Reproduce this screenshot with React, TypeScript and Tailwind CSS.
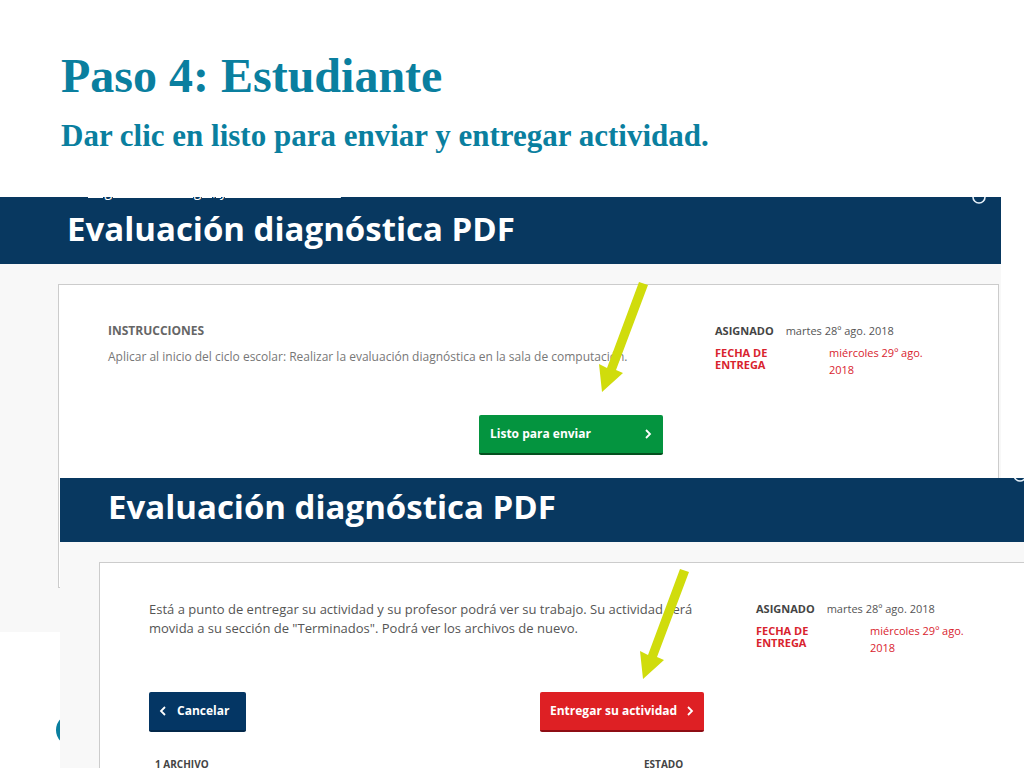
import type { ReactNode } from "react";

function Arrow({ className }: { className: string }) {
  return (
    <svg
      viewBox="0 0 49 110"
      className={`absolute bottom-full w-[49px] h-[110px] pointer-events-none ${className}`}
      aria-hidden="true"
    >
      <polygon points="40,0 49,3 17,88 24,91 3,110 0,82 8,86" fill="#d0dc0c" />
    </svg>
  );
}

function Chevron({ left = false }: { left?: boolean }) {
  return (
    <svg viewBox="0 0 8 12" className="w-2 h-3 shrink-0" aria-hidden="true">
      <path
        d={left ? "M6 2 L2 6 L6 10" : "M2 2 L6 6 L2 10"}
        fill="none"
        stroke="currentColor"
        strokeWidth="1.8"
      />
    </svg>
  );
}

function Ring({ className }: { className: string }) {
  return (
    <svg viewBox="0 0 14 14" className={`absolute size-3.5 ${className}`} aria-hidden="true">
      <circle cx="7" cy="7" r="6" fill="none" stroke="#e8f2fa" strokeWidth="1.6" />
    </svg>
  );
}

function Dates() {
  return (
    <dl className="text-[11px]">
      <div className="flex gap-3 leading-[17px]">
        <dt className="font-bold text-[#444]">ASIGNADO</dt>
        <dd className="text-[#555]">martes 28º ago. 2018</dd>
      </div>
      <div className="flex mt-[5px] text-[#d9232e]">
        <dt className="w-[114px] pt-[3px] pr-10 font-bold leading-3">FECHA DE ENTREGA</dt>
        <dd className="w-[110px] leading-[17px]">miércoles 29º ago. 2018</dd>
      </div>
    </dl>
  );
}

function Card({ children, className }: { children: ReactNode; className: string }) {
  return (
    <div
      className={`grid grid-cols-[1fr_234px] gap-x-[52px] px-[49px] pt-[37px] bg-white border border-[#ccc] ${className}`}
    >
      {children}
    </div>
  );
}

function App() {
  return (
    <main className="flex flex-col min-h-screen overflow-hidden bg-white font-['Open_Sans',sans-serif]">
      {/* Slide title */}
      <header className="h-[197px] pl-[61px] pt-12 font-['Liberation_Serif',serif] font-bold text-[#0a7f9f]">
        <h1 className="text-5xl leading-[56px]">Paso 4: Estudiante</h1>
        <p className="mt-3 text-[31px] leading-10">Dar clic en listo para enviar y entregar actividad.</p>
      </header>

      <div className="relative grid grow">
        {/* Slide logo, mostly hidden by the second capture */}
        <div className="absolute left-14 top-[517px] size-8 rounded-full bg-[#0a7f9f]" />

        {/* Step 1 */}
        <section className="relative col-start-1 row-start-1 self-start mr-[23px] pb-11 bg-[#f8f8f8]">
          <div className="relative h-[67px] pl-[67px] overflow-hidden bg-[#083860] text-white">
            <a href="#" className="absolute left-[74px] -top-4 flex items-center gap-1.5 text-sm leading-5">
              <Chevron left />
              <span className="underline">Regresar a Biología, y otras actividades</span>
            </a>
            <Ring className="right-[15px] -top-[7px]" />
            <h2 className="pt-3 text-[33px] leading-10 font-bold">Evaluación diagnóstica PDF</h2>
          </div>
          <Card className="ml-[58px] mr-0.5 mt-5 h-[304px]">
            <div>
              <h3 className="text-xs leading-[18px] font-bold text-[#666]">INSTRUCCIONES</h3>
              <p className="mt-[5px] text-xs leading-6 text-[#777]">
                Aplicar al inicio del ciclo escolar: Realizar la evaluación diagnóstica en la sala de computación.
              </p>
              <div className="flex justify-end mt-[46px]">
                <div className="relative">
                  <button className="flex items-center justify-between w-[184px] h-10 px-[11px] rounded-xs border-b-2 border-[#04501f] bg-[#04943f] text-xs font-bold text-white">
                    Listo para enviar
                    <Chevron />
                  </button>
                  <Arrow className="left-[120px] mb-[23px]" />
                </div>
              </div>
            </div>
            <Dates />
          </Card>
        </section>

        {/* Step 2 */}
        <section className="relative col-start-1 row-start-1 mt-[281px] ml-[60px] -mr-4 bg-[#f8f8f8]">
          <div className="relative h-16 pl-12 overflow-hidden bg-[#083860] text-white">
            <Ring className="right-[13px] -top-[10px]" />
            <h2 className="pt-[9px] text-[33px] leading-10 font-bold">Evaluación diagnóstica PDF</h2>
          </div>
          <Card className="ml-[39px] mt-5 border-b-0">
            <div>
              <p className="text-[13px] leading-[19px] text-[#555]">
                Está a punto de entregar su actividad y su profesor podrá ver su trabajo. Su actividad será movida a su
                sección de "Terminados". Podrá ver los archivos de nuevo.
              </p>
              <div className="flex justify-between mt-[54px]">
                <button className="flex items-center gap-2.5 w-[97px] h-10 px-2.5 rounded-xs border-b-2 border-[#03284a] bg-[#043664] text-xs font-bold text-white">
                  <Chevron left />
                  Cancelar
                </button>
                <div className="relative">
                  <button className="flex items-center justify-between w-[164px] h-10 px-2.5 rounded-xs border-b-2 border-[#8e0d14] bg-[#de2024] text-xs font-bold text-white">
                    Entregar su actividad
                    <Chevron />
                  </button>
                  <Arrow className="left-[100px] mb-[13px]" />
                </div>
              </div>
              <table className="w-full mt-7 table-fixed text-[10px] leading-2 text-[#444]">
                <thead>
                  <tr>
                    <th className="pl-1.5 text-left font-bold">1 ARCHIVO</th>
                    <th className="w-[60px] text-left font-bold">ESTADO</th>
                  </tr>
                </thead>
              </table>
            </div>
            <Dates />
          </Card>
        </section>
      </div>
    </main>
  );
}

export default App;
